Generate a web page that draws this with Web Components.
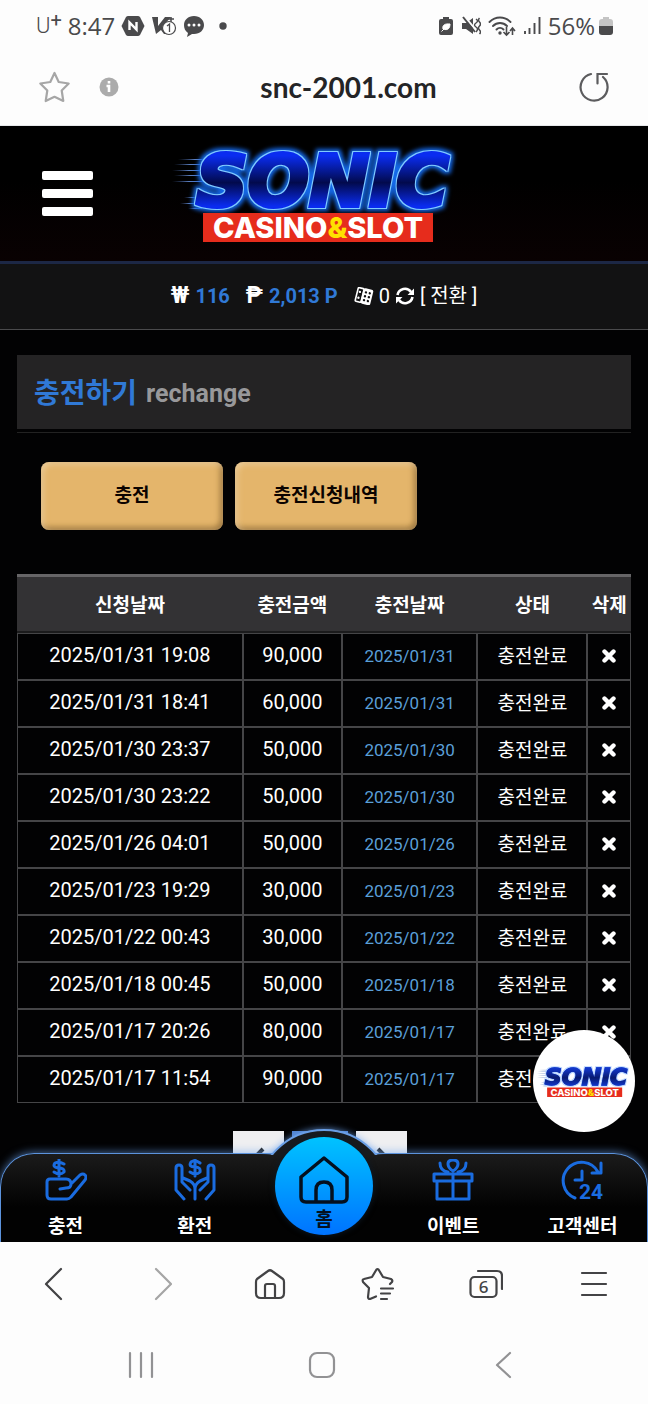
<!DOCTYPE html>
<html lang="ko">
<head>
<meta charset="utf-8">
<meta name="viewport" content="width=device-width, initial-scale=1">
<title>snc-2001.com</title>
<style>
  html, body { margin: 0; }
  body {
    min-height: 100vh;
    display: flex;
    flex-direction: column;
    background: #fdfdfd;
    font-family: Roboto, "Noto Sans CJK KR", sans-serif;
    --ink: #4a4a4c;
    --blue: #3079d6;
    --line: #454547;
  }
</style>
</head>
<body>
<status-bar></status-bar>
<address-bar url="snc-2001.com"></address-bar>
<site-view>
  <site-header slot="header"></site-header>
  <wallet-bar slot="header"></wallet-bar>
  <page-title sub="rechange">충전하기</page-title>
  <tab-row>
    <gold-button>충전</gold-button>
    <gold-button>충전신청내역</gold-button>
  </tab-row>
  <deposit-table></deposit-table>
  <page-switch></page-switch>
  <chat-badge slot="overlay"></chat-badge>
  <bottom-nav slot="overlay"></bottom-nav>
</site-view>
<browser-tools></browser-tools>
<system-nav></system-nav>

<script>
const RESET = `
  :host, *, *::before, *::after { box-sizing: border-box; }
  svg { display: block; flex: none; }
  button { border: 0; padding: 0; margin: 0; background: none; font: inherit; color: inherit; display: flex; align-items: center; justify-content: center; cursor: pointer; }
  a { color: inherit; text-decoration: none; }
`;

function component(name, css, html) {
  const template = document.createElement('template');
  template.innerHTML = `<style>${RESET}${css}</style>${html}`;
  customElements.define(name, class extends HTMLElement {
    constructor() {
      super();
      this.attachShadow({ mode: 'open' }).append(template.content.cloneNode(true));
    }
    connectedCallback() {
      for (const node of this.shadowRoot.querySelectorAll('[data-attr]')) {
        const value = this.getAttribute(node.dataset.attr) || '';
        if (node instanceof HTMLInputElement) node.value = value;
        else node.textContent = value;
      }
    }
  });
}

component('status-bar', `
  :host { display: flex; justify-content: space-between; align-items: center; height: 52px; padding: 0 35px 0 36px; color: var(--ink); font: 24px/28px "Open Sans", sans-serif; }
  div { display: flex; align-items: center; }
  .carrier { font: 300 22px/28px Roboto, sans-serif; }
  sup { font-size: 20px; line-height: 0; vertical-align: 6px; font-weight: 400; }
  .left { gap: 6px; }
  .right { gap: 7px; }
  .charge { gap: 4px; }
`, `
  <div class="left">
    <span class="carrier">U<sup>+</sup></span>
    <span>8:47</span>
    <svg width="24" height="22" viewBox="0 0 24 22"><path d="M7 1h10q1 0 2 1l4 8q1 1 0 2l-4 8q-1 1-2 1H7q-1 0-2-1l-4-8q-1-1 0-2l4-8q1-1 2-1z" fill="#4a4a4c"/><path d="M8.500 15V7.500l7 7V7" fill="none" stroke="#fff" stroke-width="2.400"/></svg>
    <svg width="26" height="22" viewBox="0 0 26 22"><path d="M1 2h6v9l7-9h6l-8 9 5 8h-4l-3-4-5 4H5z" fill="#4a4a4c"/><path d="M17 4h6M20 2v5" stroke="#4a4a4c" stroke-width="1.500"/><circle cx="18" cy="13" r="6.500" fill="#fff" stroke="#4a4a4c" stroke-width="1.200"/><path d="M16 11l2.500-2v8" fill="none" stroke="#4a4a4c" stroke-width="1.300"/></svg>
    <svg width="22" height="22" viewBox="0 0 22 22"><path d="M11 1c6 0 10 4 10 9s-4 9-10 9l-2 0-5 3 1-4C2 16 1 13 1 10c0-5 4-9 10-9z" fill="#4a4a4c"/><g fill="#fff"><circle cx="6" cy="10" r="1.500"/><circle cx="11" cy="10" r="1.500"/><circle cx="16" cy="10" r="1.500"/></g></svg>
    <svg width="22" height="8" viewBox="0 0 22 8"><circle cx="12" cy="4" r="3.700" fill="#4a4a4c"/></svg>
  </div>
  <div class="right">
    <svg width="16" height="20" viewBox="0 0 16 20"><path d="M5 1h6v2h2q2 0 2 2v12q0 2-2 2H3q-2 0-2-2V5q0-2 2-2h2z" fill="#4a4a4c"/><path d="M3.500 15.500l3-3M5 13c-1-4 2-5.500 7-5 0 4-2 7-7 5z" fill="#fff" stroke="#fff"/></svg>
    <svg width="20" height="20" viewBox="0 0 20 20"><path d="M1 7h4l7-5v16l-7-5H1z" fill="#4a4a4c"/><path d="M3 0l12 14" stroke="#fdfdfd" stroke-width="2"/><path d="M2 1l12 15" stroke="#4a4a4c" stroke-width="2"/><path d="M15 3q3 2 0 4t0 4 0 5M18.500 2q-2 2 0 4t0 4 0 4 0 4" fill="none" stroke="#4a4a4c" stroke-width="1.500"/></svg>
    <svg width="28" height="22" viewBox="0 0 28 22"><g fill="none" stroke="#4a4a4c" stroke-width="1.900" stroke-linecap="round"><path d="M1.500 7c6-6 15-6 21 0M5 11c4-4 10-4 14 0M8.500 14.500c2-2 5-2 7 0"/></g><circle cx="12" cy="18" r="1.700" fill="#4a4a4c"/><path d="M18.500 12v8m-3-3l3 3 3-3M24.500 20v-7m-2.500 3l2.500-3 2.500 3" fill="none" stroke="#4a4a4c" stroke-width="1.600"/></svg>
    <svg width="18" height="20" viewBox="0 0 18 20"><path d="M2 15v3M6.500 12v6M11.500 7v11M16.500 1v17" stroke="#4a4a4c" stroke-width="1.900"/></svg>
    <div class="charge"><span>56%</span>
    <svg width="14" height="20" viewBox="0 0 14 20"><path d="M4 1h6v2h1q3 0 3 3v5H0V6q0-3 3-3h1z" fill="#c4c4c4"/><path d="M0 10h14v6q0 3-3 3H3q-3 0-3-3z" fill="#4a4a4c"/></svg></div>
  </div>
`);

component('address-bar', `
  :host { display: flex; align-items: center; height: 74px; padding: 0 38px 4px; border-bottom: 1px solid #e6e8ea; }
  .info { margin-left: 28px; }
  input { flex: 1; min-width: 0; border: 0; background: none; outline: 0; padding: 0; text-align: center; font: 700 28px/36px Lato, sans-serif; color: #242426; }
`, `
  <button aria-label="즐겨찾기"><svg width="33" height="34" viewBox="0 0 33 34"><path d="M16.500 3l4.200 9 10 1.500-7 7 1.600 10.500-8.800-4.200L7.700 31l1.600-10.500-7-7 10-1.500z" fill="none" stroke="#a6a6a6" stroke-width="2.200" stroke-linejoin="round"/></svg></button>
  <button class="info" aria-label="사이트 정보"><svg width="20" height="20" viewBox="0 0 20 20"><circle cx="10" cy="10" r="9.500" fill="#ababab"/><path d="M10 4v2.500M7.500 9H10v6" fill="none" stroke="#fff" stroke-width="2.600"/></svg></button>
  <input type="text" aria-label="주소" data-attr="url" readonly>
  <button aria-label="새로고침"><svg width="32" height="32" viewBox="0 0 32 32"><g fill="none" stroke="#5c5c5e" stroke-width="2.200" stroke-linecap="round"><path d="M13 3a13.500 13.500 0 1 0 12 3"/><path d="M29 3H19.500v9.500"/></g></svg></button>
`);

component('site-view', `
  :host { display: flex; flex-direction: column; flex: 1; position: relative; overflow: hidden; background: #020203; }
  main { display: flex; flex-direction: column; padding: 25px 17px 40px; }
`, `<slot name="header"></slot><main><slot></slot></main><slot name="overlay"></slot>`);

component('sonic-logo', `
  :host { display: block; --edge: #7fcaff; --top: #0a2cf0; --mid: #020a4c; --glow: #1468e8; }
  :host([light]) { --edge: #1a48d0; --top: #1236c8; --mid: #081a70; --glow: #b8d4ff; }
  svg { width: 100%; height: auto; overflow: visible; }
  .name { font: italic 700 72px "DejaVu Sans", sans-serif; fill: url(#body); stroke: url(#body); stroke-width: 4; filter: url(#neon); }
  .tag { font: 800 29px Inter, sans-serif; fill: #fff; }
  .tag tspan { fill: #ffe000; }
  .t { stop-color: var(--top); } .m { stop-color: var(--mid); }
  .e { flood-color: var(--edge); } .g { flood-color: var(--glow); }
`, `
  <svg viewBox="0 0 288 100" role="img" aria-label="SONIC CASINO&amp;SLOT">
    <defs><linearGradient id="body" x1="0" y1="0" x2="0" y2="1"><stop class="t" offset=".2"/><stop class="m" offset=".52"/><stop class="t" offset=".8"/></linearGradient>
    <linearGradient id="speed"><stop offset="0" stop-color="#3b5488" stop-opacity="0"/><stop offset=".5" stop-color="#5b7fc0"/><stop offset="1" stop-color="#2f6fe0"/></linearGradient>
    <filter id="neon" x="-10%" y="-20%" width="120%" height="140%" color-interpolation-filters="sRGB">
      <feMorphology in="SourceAlpha" operator="dilate" radius="1" result="d1"/>
      <feFlood class="e"/><feComposite in2="d1" operator="in" result="edge"/>
      <feMorphology in="SourceAlpha" operator="dilate" radius="3" result="d3"/>
      <feGaussianBlur in="d3" stdDeviation="2" result="soft"/>
      <feFlood class="g"/><feComposite in2="soft" operator="in" result="glow"/>
      <feMerge><feMergeNode in="glow"/><feMergeNode in="edge"/><feMergeNode in="SourceGraphic"/></feMerge>
    </filter></defs>
    <g fill="url(#speed)"><rect x="6" y="15" width="34" height="1"/><rect x="2" y="20" width="32" height="1"/><rect x="0" y="26" width="34" height="1"/><rect x="2" y="31" width="32" height="1"/><rect x="0" y="37" width="34" height="1"/><rect x="12" y="53" width="16" height="1"/><rect x="8" y="59" width="18" height="1"/><rect x="16" y="64" width="14" height="1"/></g>
    <text class="name" x="24" y="62">SONIC</text>
    <rect x="31" y="69" width="230" height="29" fill="#e62c1c"/>
    <text class="tag" x="146" y="94" text-anchor="middle">CASINO<tspan>&amp;</tspan>SLOT</text>
  </svg>
`);

component('site-header', `
  :host { display: flex; align-items: center; height: 138px; padding: 0 42px; background: linear-gradient(#000 40%, #090102); border-bottom: 3px solid #1c2745; }
  a { display: block; width: 288px; margin-left: 79px; }
`, `
  <button aria-label="메뉴"><svg width="51" height="45" viewBox="0 0 51 45" fill="#fff"><rect width="51" height="9" rx="2"/><rect y="18" width="51" height="9" rx="2"/><rect y="36" width="51" height="9" rx="2"/></svg></button>
  <a href="#"><sonic-logo></sonic-logo></a>
`);

component('wallet-bar', `
  :host { display: flex; align-items: center; justify-content: center; height: 66px; padding-bottom: 2px; background: #121213; border-bottom: 1px solid #4a4a4c; color: #fff; font-size: 20px; line-height: 24px; }
  div { display: flex; align-items: center; }
  b { font-weight: 700; font-size: 23px; }
  strong { color: var(--blue); font-weight: 700; margin-left: 6px; }
  .point, .chips { margin-left: 16px; }
  .chips { gap: 5px; }
  button { gap: 5px; }
`, `
  <div><b>₩</b><strong>116</strong></div>
  <div class="point"><b>₱</b><strong>2,013 P</strong></div>
  <div class="chips">
    <svg width="20" height="18" viewBox="0 0 20 18"><g transform="rotate(14 10 9)"><rect x="2.500" y="2" width="6" height="14" rx="1" fill="none" stroke="#fff" stroke-width="1.600"/><rect x="8" y="1" width="10" height="16" rx="2" fill="#fff"/><g fill="#121213"><circle cx="11" cy="5" r="1.200"/><circle cx="15" cy="5" r="1.200"/><circle cx="11" cy="9" r="1.200"/><circle cx="15" cy="9" r="1.200"/><circle cx="11" cy="13" r="1.200"/><circle cx="15" cy="13" r="1.200"/></g><g fill="#fff"><circle cx="5" cy="6" r="1.200"/><circle cx="5" cy="12" r="1.200"/></g></g></svg>
    <span>0</span>
    <button><svg width="20" height="20" viewBox="0 0 20 20"><path d="M2.500 9A7.500 7.500 0 0 1 16 6M17.500 11A7.500 7.500 0 0 1 4 14" fill="none" stroke="#fff" stroke-width="2.600"/><path d="M19 2.500V9h-6.500zM1 17.500V11h6.500z" fill="#fff"/></svg><span>[ 전환 ]</span></button>
  </div>
`);

component('page-title', `
  :host { display: block; padding-bottom: 3px; border-bottom: 1px solid #222; }
  h1 { margin: 0; height: 74px; padding: 4px 17px 0; display: flex; align-items: center; gap: 9px; background: #242324; font-size: 28px; line-height: 40px; font-weight: 700; color: var(--blue); }
  small { font-size: 25px; font-weight: 700; color: #98989a; }
`, `<h1><span><slot></slot></span><small data-attr="sub"></small></h1>`);

component('tab-row', `
  :host { display: flex; gap: 12px; padding: 29px 24px 44px; }
`, `<slot></slot>`);

component('gold-button', `
  :host { display: block; flex: 0 1 182px; }
  button { width: 100%; height: 68px; border-radius: 8px; background: #e4b56b; color: #0b0300; font-size: 19px; line-height: 28px; font-weight: 700; box-shadow: inset 2px 2px 6px rgba(255, 235, 200, .6), inset -2px -2px 6px rgba(80, 50, 10, .6); }
`, `<button><slot></slot></button>`);

const DEPOSITS = [
  ['2025/01/31', '19:08', '90,000'], ['2025/01/31', '18:41', '60,000'],
  ['2025/01/30', '23:37', '50,000'], ['2025/01/30', '23:22', '50,000'],
  ['2025/01/26', '04:01', '50,000'], ['2025/01/23', '19:29', '30,000'],
  ['2025/01/22', '00:43', '30,000'], ['2025/01/18', '00:45', '50,000'],
  ['2025/01/17', '20:26', '80,000'], ['2025/01/17', '11:54', '90,000'],
];

component('deposit-table', `
  :host { display: block; }
  table { width: 100%; table-layout: fixed; border-collapse: separate; border-spacing: 0; color: #fff; text-align: center; font-size: 20px; line-height: 24px; }
  col:nth-child(1) { width: 36.8%; } col:nth-child(2) { width: 16.1%; } col:nth-child(3) { width: 22.1%; } col:nth-child(4) { width: 17.9%; }
  th { height: 59px; padding: 4px 0 0; background: #333234; border-top: 3px solid #666567; border-bottom: 2px solid #1b1b1c; font-size: 19px; font-weight: 700; white-space: nowrap; }
  td { height: 47px; padding: 0 0 4px; border: 1px solid var(--line); white-space: nowrap; }
  .date { font-size: 17px; color: #5a9fd8; padding: 0 0 2px; }
  .state { font-size: 19px; padding: 0; }
  .drop { padding: 0 0 2px; }
  td button { width: 100%; height: 24px; }
`, `
  <table>
    <colgroup><col><col><col><col><col></colgroup>
    <thead><tr><th>신청날짜</th><th>충전금액</th><th>충전날짜</th><th>상태</th><th>삭제</th></tr></thead>
    <tbody>${DEPOSITS.map(([day, time, amount]) => `
      <tr><td>${day} ${time}</td><td>${amount}</td><td class="date">${day}</td><td class="state">충전완료</td>
      <td class="drop"><button aria-label="삭제"><svg width="14" height="14" viewBox="0 0 14 14"><path d="M2.500 2.500l9 9M11.500 2.500l-9 9" stroke="#fff" stroke-width="4.400" stroke-linecap="round"/></svg></button></td></tr>`).join('')}
    </tbody>
  </table>
`);

component('page-switch', `
  :host { display: flex; justify-content: center; gap: 8px; padding: 28px 8px 0 0; }
  button { width: 51px; height: 50px; background: #efeff1; color: #222; }
  .now { width: 56px; background: #4f82cf; }
`, `
  <button aria-label="이전"><svg width="18" height="18" viewBox="0 0 18 18"><path d="M13 2L6 9l7 7" fill="none" stroke="#222" stroke-width="4"/></svg></button>
  <button class="now" aria-label="현재 페이지"></button>
  <button aria-label="다음"><svg width="18" height="18" viewBox="0 0 18 18"><path d="M5 2l7 7-7 7" fill="none" stroke="#222" stroke-width="4"/></svg></button>
`);

component('chat-badge', `
  :host { position: absolute; right: 13px; bottom: 110px; }
  a { display: flex; align-items: center; justify-content: center; width: 102px; height: 102px; border-radius: 50%; background: #fff; }
  sonic-logo { width: 94px; }
`, `<a href="#"><sonic-logo light></sonic-logo></a>`);

component('bottom-nav', `
  :host { position: absolute; left: 0; right: 0; bottom: 0; display: block; }
  nav { position: relative; display: flex; height: 89px; border: 1px solid #5c93dd; border-bottom: 0; border-radius: 34px 34px 0 0; background: linear-gradient(#1b1b1b, #020202 60%); box-shadow: 0 -1px 8px rgba(110, 165, 240, .6); }
  .bump { position: absolute; left: calc(50% - 68px); top: -25px; width: 136px; height: 136px; border-radius: 50%; border: 2px solid #6a9fe6; background: #191b1d; box-shadow: 0 0 7px rgba(110, 165, 240, .8); clip-path: inset(-12px -12px 110px -12px); }
  a { flex: 1; position: relative; display: flex; flex-direction: column; align-items: center; gap: 10px; padding-top: 5px; color: #fff; font-size: 19px; line-height: 32px; font-weight: 700; }
  .home { align-self: center; flex: 1; display: flex; justify-content: center; padding: 0; }
  .disc { display: flex; flex-direction: column; align-items: center; width: 98px; height: 98px; margin-top: -24px; padding-top: 19px; border-radius: 50%; background: linear-gradient(#00c3ff, #0073ff); color: #04101e; line-height: 28px; box-shadow: 0 0 6px #0c1a28; }
  .line { fill: none; stroke: #1a6ce0; stroke-width: 3; stroke-linejoin: round; stroke-linecap: round; }
  text { fill: #1a6ce0; font: 700 21px Roboto, sans-serif; }
`, `
  <nav>
    <span class="bump"></span>
    <a href="#"><svg width="42" height="42" viewBox="0 0 42 42"><g class="line"><path d="M19 5q-5-3-9-1-3 4 3 5 7 0 6 4-4 4-10 0M14 0v17"/><path d="M5 20h16q5 0 5 5 0 4-5 4l-6 1M26 25l9-9q3-2 5 0 2 2 0 5L26 38q-2 2-4 2H6q-4 0-4-4V23q0-3 3-3"/></g></svg><span>충전</span></a>
    <a href="#"><svg width="42" height="42" viewBox="0 0 42 42"><g class="line"><path d="M26 4q-5-4-9-1-3 5 4 5 6 0 5 5-4 4-10 0M21 0v17"/><path d="M10 40L2 31V9q0-3 3-3t3 3v14l8 8M9 19l7 3q5 3 5 8v10M32 40l8-9V9q0-3-3-3t-3 3v14l-8 8M33 19l-7 3q-5 3-5 8"/></g></svg><span>환전</span></a>
    <a href="#" class="home"><span class="disc"><svg width="50" height="50" viewBox="0 0 50 50"><path d="M2 21L25 2l23 19v20q0 5-5 5H7q-5 0-5-5zM17 46V34q0-8 8-8t8 8v12" fill="none" stroke="#04101e" stroke-width="3.500" stroke-linejoin="round"/></svg><span>홈</span></span></a>
    <a href="#"><svg width="42" height="42" viewBox="0 0 42 42"><g class="line"><path d="M2 15h38v7H2zM5 22v18h32V22M21 15v25M21 12q-5-3-5-7t5-4q5 0 5 4t-5 7zM8 4q0 8 8 9M34 4q0 8-8 9"/></g></svg><span>이벤트</span></a>
    <a href="#"><svg width="42" height="42" viewBox="0 0 42 42"><g class="line"><path d="M14 39A18.500 18.500 0 1 1 37 13M40 4v10h-9M21 12v9h-7"/></g><text x="18" y="40">24</text></svg><span>고객센터</span></a>
  </nav>
`);

component('browser-tools', `
  :host { display: flex; height: 83px; align-items: center; }
  button { flex: 1; height: 48px; }
  g { fill: none; stroke: #434345; stroke-width: 2.200; stroke-linecap: round; stroke-linejoin: round; }
  .off { stroke: #a5a5a5; }
  text { font: 500 17px "Noto Sans", sans-serif; fill: #434345; }
`, `
  <button aria-label="뒤로"><svg width="20" height="34" viewBox="0 0 20 34"><g><path d="M17 2L2 17l15 15"/></g></svg></button>
  <button aria-label="앞으로"><svg width="20" height="34" viewBox="0 0 20 34"><g class="off"><path d="M4 2l15 15L4 32"/></g></svg></button>
  <button aria-label="홈"><svg width="32" height="32" viewBox="0 0 32 32"><g><path d="M2 14q0-2 1-3L14 3q2-1.500 4 0l11 8q1 1 1 3v11q0 5-5 5H7q-5 0-5-5zM11 30V18q0-2 2-2h6q2 0 2 2v12"/></g></svg></button>
  <button aria-label="북마크"><svg width="34" height="34" viewBox="0 0 34 34"><g><path d="M15 29.500L9 32q-2 0-2-2l1-9-6-6q-1-3 1-3l8-2 4.500-7.500q1-1 2 0L22 10l8 2q2 1 1 3l-2 2M20 21.500h12M20 26.500h9M20 32h6"/></g></svg></button>
  <button aria-label="탭"><svg width="34" height="32" viewBox="0 0 34 32"><g><rect x="1.500" y="9" width="26" height="20" rx="4"/><path d="M9 3h19q5 0 5 5v13"/></g><text x="14.500" y="25" text-anchor="middle">6</text></svg></button>
  <button aria-label="메뉴"><svg width="28" height="26" viewBox="0 0 28 26"><g><path d="M2 2h24M2 13h24M2 24h24"/></g></svg></button>
`);

component('system-nav', `
  :host { display: flex; height: 79px; align-items: center; padding: 0 54px 0 50px; }
  button { flex: 1; height: 44px; }
  g { fill: none; stroke: #929294; stroke-width: 2.200; stroke-linecap: round; stroke-linejoin: round; }
`, `
  <button aria-label="최근 앱"><svg width="26" height="28" viewBox="0 0 26 28"><g><path d="M2 2v24M13 2v24M24 2v24"/></g></svg></button>
  <button aria-label="홈 화면"><svg width="28" height="28" viewBox="0 0 28 28"><g><rect x="2" y="2" width="24" height="24" rx="7"/></g></svg></button>
  <button aria-label="이전 화면"><svg width="18" height="28" viewBox="0 0 18 28"><g><path d="M16 2L3 14l13 12"/></g></svg></button>
`);
</script>
</body>
</html>
